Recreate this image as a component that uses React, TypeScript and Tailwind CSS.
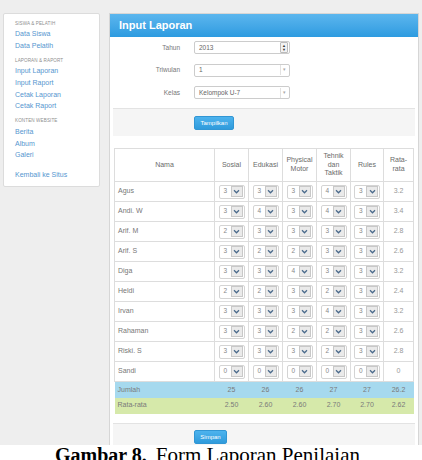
import { ReactNode } from "react";

type Row = { name: string; scores: number[]; avg: string };

const rows: Row[] = [
  { name: "Agus", scores: [3, 3, 3, 4, 3], avg: "3.2" },
  { name: "Andi. W", scores: [3, 4, 3, 4, 3], avg: "3.4" },
  { name: "Arif. M", scores: [2, 3, 3, 3, 3], avg: "2.8" },
  { name: "Arif. S", scores: [3, 2, 2, 3, 3], avg: "2.6" },
  { name: "Diga", scores: [3, 3, 4, 3, 3], avg: "3.2" },
  { name: "Heldi", scores: [2, 2, 3, 2, 3], avg: "2.4" },
  { name: "Irvan", scores: [3, 3, 3, 4, 3], avg: "3.2" },
  { name: "Rahaman", scores: [3, 3, 2, 2, 3], avg: "2.6" },
  { name: "Riski. S", scores: [3, 3, 3, 2, 3], avg: "2.8" },
  { name: "Sandi", scores: [0, 0, 0, 0, 0], avg: "0" },
];

const jumlah = ["25", "26", "26", "27", "27", "26.2"];
const rataRata = ["2.50", "2.60", "2.60", "2.70", "2.70", "2.62"];

const menu = [
  { title: "Siswa & Pelatih", links: ["Data Siswa", "Data Pelatih"] },
  { title: "Laporan & Raport", links: ["Input Laporan", "Input Raport", "Cetak Laporan", "Cetak Raport"] },
  { title: "Konten Website", links: ["Berita", "Album", "Galeri"] },
];

function Chevron() {
  return (
    <svg viewBox="0 0 8 6" className="h-[5px] w-[7px]">
      <path d="M1 1.5 L4 4.5 L7 1.5" fill="none" stroke="#4a6a8c" strokeWidth="1.5" />
    </svg>
  );
}

function ScoreSelect({ value }: { value: number }) {
  return (
    <div className="mx-auto flex h-[14px] w-[26px] items-center rounded-[2px] border border-[#d4d4d4] bg-white pl-[4px] pr-[1px]">
      <span className="flex-1 text-[6.5px] leading-none text-[#888]">{value}</span>
      <span className="flex h-[11px] w-[12px] items-center justify-center border border-[#c8c8c8] bg-[#eaeaea]">
        <Chevron />
      </span>
    </div>
  );
}

function FormRow({ label, children }: { label: string; children: ReactNode }) {
  return (
    <div className="flex h-[13px] items-center">
      <span className="w-[68px] pr-[1px] text-right text-[6.5px] text-[#777]">{label}</span>
      <div className="ml-[13px] flex h-[13px] w-[96px] items-center rounded-[2px] border border-[#cccccc] bg-white pl-[4px] pr-[1px] text-[6.5px] text-[#666]">
        {children}
      </div>
    </div>
  );
}

function SelectArrow() {
  return (
    <span className="flex h-[10px] w-[8px] items-center justify-center border-l border-[#e2e2e2] text-[5px] text-[#aaa]">
      ▾
    </span>
  );
}

function Button({ label, width }: { label: string; width: string }) {
  return (
    <button
      type="button"
      className={`${width} h-[14px] rounded-[2px] border border-[#3196d4] bg-gradient-to-b from-[#4db3ee] to-[#2f9bdc] text-[6px] leading-none text-white`}
    >
      {label}
    </button>
  );
}

export default function App() {
  return (
    <div className="h-[460px] w-[422px] overflow-hidden bg-white font-['Liberation_Sans',Arial,sans-serif]">
      <div className="flex h-[445px] items-start overflow-hidden bg-[#eeeeee] pl-[3px] pt-[13px]">
        {/* side menu */}
        <aside className="h-[174px] w-[97px] rounded-[2px] border border-[#dcdcdc] bg-white pl-[11px] pt-[5.5px]">
          {menu.map((group, i) => (
            <div key={group.title} className={i > 0 ? "mt-[4.9px]" : ""}>
              <div className="flex h-[9px] items-center text-[4.6px] uppercase tracking-[0.1px] text-[#8f8f8f]">
                {group.title}
              </div>
              {group.links.map((link) => (
                <div key={link} className="flex h-[11.7px] items-center text-[7px] text-[#5596cf]">
                  {link}
                </div>
              ))}
            </div>
          ))}
          <div className="mt-[7.6px] flex h-[11.7px] items-center text-[7px] text-[#5596cf]">Kembali ke Situs</div>
        </aside>

        {/* main panel */}
        <main className="ml-[9px] w-[310px] border border-[#d6d6d6] bg-white">
          <div className="flex h-[23px] items-center bg-gradient-to-b from-[#5bb6ee] to-[#2c9be0] pl-[9px] text-[11px] font-bold text-white">
            Input Laporan
          </div>

          <div className="px-[3px] pt-[4px]">
            <div className="flex flex-col gap-[9.5px]">
              <FormRow label="Tahun">
                <span className="flex-1">2013</span>
                <span className="flex h-[11px] w-[8px] flex-col items-center justify-center rounded-[1px] border border-[#bbb] bg-[#f2f2f2] text-[4px] leading-[4px] text-[#333]">
                  <span>▲</span>
                  <span>▼</span>
                </span>
              </FormRow>
              <FormRow label="Triwulan">
                <span className="flex-1">1</span>
                <SelectArrow />
              </FormRow>
              <FormRow label="Kelas">
                <span className="flex-1">Kelompok U-7</span>
                <SelectArrow />
              </FormRow>
            </div>

            <div className="mt-[9px] flex h-[28px] items-center border-t border-[#e3e3e3] bg-[#f5f5f5] pl-[81px]">
              <Button label="Tampilkan" width="w-[40px]" />
            </div>

            <table className="mt-[12px] ml-[1px] w-[299px] table-fixed border-collapse text-[7px] text-[#777]">
              <colgroup>
                <col className="w-[100px]" />
                <col className="w-[34px]" />
                <col className="w-[34px]" />
                <col className="w-[34px]" />
                <col className="w-[34px]" />
                <col className="w-[33px]" />
                <col className="w-[30px]" />
              </colgroup>
              <thead>
                <tr className="h-[33px] leading-[8.7px] text-[#6a6a6a]">
                  <th className="border border-[#dddddd] font-normal">Nama</th>
                  <th className="border border-[#dddddd] font-normal">Sosial</th>
                  <th className="border border-[#dddddd] font-normal">Edukasi</th>
                  <th className="border border-[#dddddd] font-normal">
                    Physical
                    <br />
                    Motor
                  </th>
                  <th className="border border-[#dddddd] font-normal">
                    Tehnik
                    <br />
                    dan
                    <br />
                    Taktik
                  </th>
                  <th className="border border-[#dddddd] font-normal">Rules</th>
                  <th className="border border-[#dddddd] font-normal">
                    Rata-
                    <br />
                    rata
                  </th>
                </tr>
              </thead>
              <tbody>
                {rows.map((row) => (
                  <tr key={row.name} className="h-[20px]">
                    <td className="border border-[#dddddd] pl-[3px]">{row.name}</td>
                    {row.scores.map((s, i) => (
                      <td key={i} className="border border-[#dddddd] p-0">
                        <ScoreSelect value={s} />
                      </td>
                    ))}
                    <td className="border border-[#dddddd] text-center text-[#999]">{row.avg}</td>
                  </tr>
                ))}
                <tr className="h-[16px] bg-[#a6d9ee] text-[#7a7a7a]">
                  <td className="pl-[3px]">Jumlah</td>
                  {jumlah.map((v, i) => (
                    <td key={i} className="text-center">
                      {v}
                    </td>
                  ))}
                </tr>
                <tr className="h-[16px] bg-[#d6e9aa] text-[#7a7a7a]">
                  <td className="pl-[3px]">Rata-rata</td>
                  {rataRata.map((v, i) => (
                    <td key={i} className="text-center">
                      {v}
                    </td>
                  ))}
                </tr>
              </tbody>
            </table>

            <div className="mt-[9px] flex h-[28px] items-center border-t border-[#e3e3e3] bg-[#f5f5f5] pl-[81px]">
              <Button label="Simpan" width="w-[33px]" />
            </div>
          </div>
        </main>
      </div>

      <p className="pl-[55px] font-['Liberation_Serif','Times_New_Roman',serif] text-[20px] leading-none text-black">
        <b>Gambar 8.</b>
        <span className="ml-[9px] text-[21px]">Form Laporan Penilaian</span>
      </p>
    </div>
  );
}
